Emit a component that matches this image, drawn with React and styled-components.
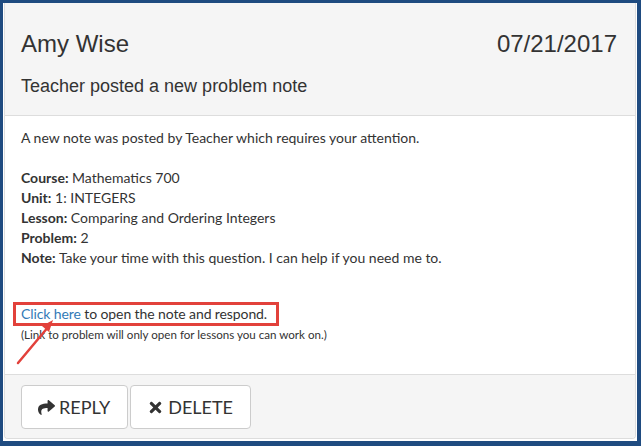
import React from 'react';
import styled, { createGlobalStyle } from 'styled-components';
import { FaShare, FaTimes } from 'react-icons/fa';

const GlobalStyle = createGlobalStyle`
    html, body {
        margin: 0;
        padding: 0;
        background: #1f4b80;
    }
`;

const Frame = styled.div`
    width: 641px;
    height: 446px;
    box-sizing: border-box;
    padding: 3px 4px 5px 3px;
    background: #1f4b80;
`;

const Sheet = styled.div`
    height: 100%;
    box-sizing: border-box;
    background: #fff;
    padding: 0 1px 2px 1px;
`;

const Panel = styled.div`
    height: 100%;
    box-sizing: border-box;
    border: 1px solid #ddd;
    border-top: none;
    border-radius: 0 0 4px 4px;
    display: flex;
    flex-direction: column;
    overflow: hidden;
`;

const Header = styled.div`
    background: #f5f5f5;
    border-bottom: 1px solid #ddd;
    height: 113px;
    box-sizing: border-box;
    padding: 28px 18px 0 16px;
    font-family: "Liberation Sans", Arial, sans-serif;
    color: #333;
`;

const TitleRow = styled.div`
    display: flex;
    justify-content: space-between;
    align-items: baseline;
    font-size: 24px;
    line-height: 26px;
`;

const Subtitle = styled.div`
    font-size: 18px;
    line-height: 20px;
    margin-top: 19px;
`;

const Body = styled.div`
    position: relative;
    flex: 1;
    padding: 12px 16px 0 16px;
    font-family: Lato, "Open Sans", sans-serif;
    font-size: 14px;
    line-height: 20px;
    color: #333;
`;

const Para = styled.p`
    margin: 0 0 ${p => p.$gap || 0}px 0;
`;

const Label = styled.b`
    font-weight: 700;
`;

const Callout = styled.div`
    display: inline-block;
    margin: 0 0 0 -8px;
    padding: 0 9px 0 5px;
    border: 3px solid #e2413b;
    line-height: 18px;
    letter-spacing: -0.1px;
`;

const Link = styled.a`
    color: #337ab7;
    text-decoration: none;
`;

const Hint = styled.div`
    font-size: 11.6px;
    line-height: 14px;
    margin-top: 2px;
`;

const Arrow = styled.svg`
    position: absolute;
    left: 11px;
    top: 199px;
    overflow: visible;
`;

const Footer = styled.div`
    background: #f5f5f5;
    border-top: 1px solid #ddd;
    height: 64px;
    box-sizing: border-box;
    padding: 10px 16px;
    display: flex;
    gap: 2px;
`;

const Button = styled.button`
    display: flex;
    align-items: center;
    gap: 4px;
    height: 44px;
    padding: 0 17px 0 16px;
    background: #fff;
    border: 1px solid #ccc;
    border-radius: 4px;
    font-family: Lato, "Open Sans", sans-serif;
    font-size: 18px;
    color: #333;
    text-transform: uppercase;
    svg {
        font-size: 17px;
    }
`;

const App = () => {
    return (
        <>
            <GlobalStyle />
            <Frame>
                <Sheet>
                    <Panel>
                        <Header>
                            <TitleRow>
                                <span>Amy Wise</span>
                                <span>07/21/2017</span>
                            </TitleRow>
                            <Subtitle>Teacher posted a new problem note</Subtitle>
                        </Header>
                        <Body>
                            <Para $gap={20}>A new note was posted by Teacher which requires your attention.</Para>
                            <Para><Label>Course:</Label> Mathematics 700</Para>
                            <Para><Label>Unit:</Label> 1: INTEGERS</Para>
                            <Para><Label>Lesson:</Label> Comparing and Ordering Integers</Para>
                            <Para><Label>Problem:</Label> 2</Para>
                            <Para $gap={34}><Label>Note:</Label> Take your time with this question. I can help if you need me to.</Para>
                            <Callout><Link href="#">Click here</Link> to open the note and respond.</Callout>
                            <Hint>(Link to problem will only open for lessons you can work on.)</Hint>
                            {/* annotation arrow */}
                            <Arrow width="50" height="50" viewBox="0 0 50 50">
                                <line x1="2" y1="48" x2="33" y2="11" stroke="#e2413b" strokeWidth="2.5" strokeLinecap="round" />
                                <path d="M37 5 L26 11 L33 17 Z" fill="#e2413b" />
                            </Arrow>
                        </Body>
                        <Footer>
                            <Button><FaShare /> Reply</Button>
                            <Button><FaTimes /> Delete</Button>
                        </Footer>
                    </Panel>
                </Sheet>
            </Frame>
        </>
    );
};

export default App;
